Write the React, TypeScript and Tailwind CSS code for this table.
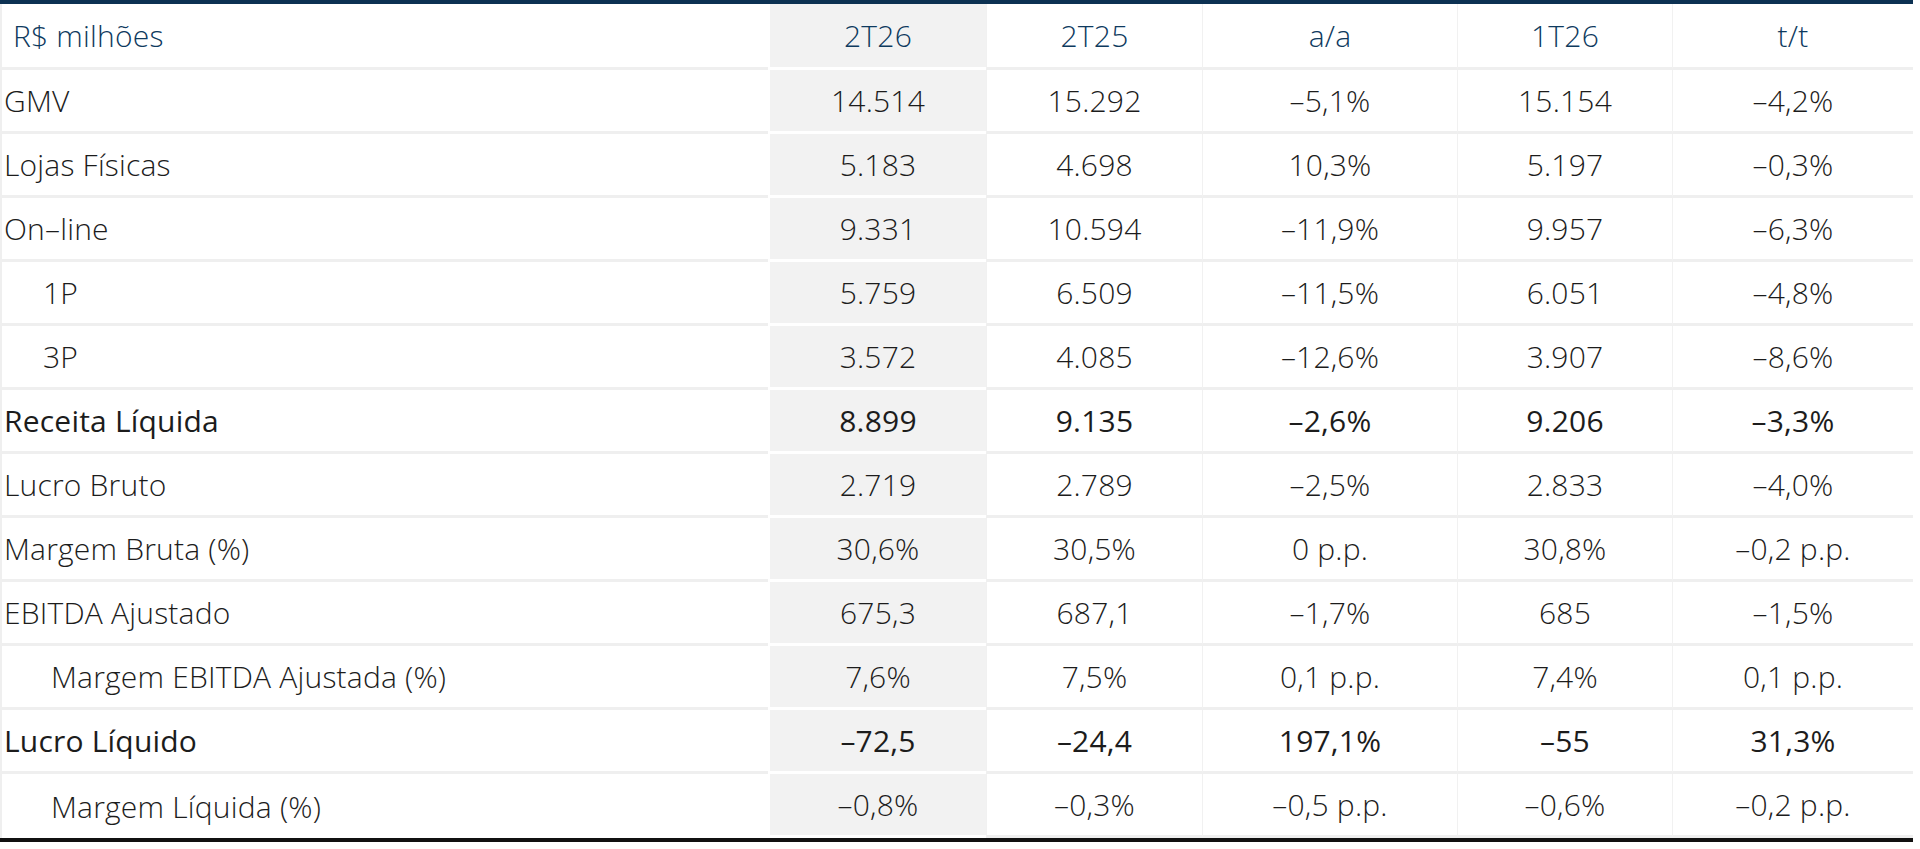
type Row = {
  label: string;
  indent?: 0 | 1 | 2;
  strong?: boolean;
  values: string[];
};

const rows: Row[] = [
  { label: 'GMV', values: ['14.514', '15.292', '–5,1%', '15.154', '–4,2%'] },
  { label: 'Lojas Físicas', values: ['5.183', '4.698', '10,3%', '5.197', '–0,3%'] },
  { label: 'On–line', values: ['9.331', '10.594', '–11,9%', '9.957', '–6,3%'] },
  { label: '1P', indent: 1, values: ['5.759', '6.509', '–11,5%', '6.051', '–4,8%'] },
  { label: '3P', indent: 1, values: ['3.572', '4.085', '–12,6%', '3.907', '–8,6%'] },
  { label: 'Receita Líquida', strong: true, values: ['8.899', '9.135', '–2,6%', '9.206', '–3,3%'] },
  { label: 'Lucro Bruto', values: ['2.719', '2.789', '–2,5%', '2.833', '–4,0%'] },
  { label: 'Margem Bruta (%)', values: ['30,6%', '30,5%', '0 p.p.', '30,8%', '–0,2 p.p.'] },
  { label: 'EBITDA Ajustado', values: ['675,3', '687,1', '–1,7%', '685', '–1,5%'] },
  { label: 'Margem EBITDA Ajustada (%)', indent: 2, values: ['7,6%', '7,5%', '0,1 p.p.', '7,4%', '0,1 p.p.'] },
  { label: 'Lucro Líquido', strong: true, values: ['–72,5', '–24,4', '197,1%', '–55', '31,3%'] },
  { label: 'Margem Líquida (%)', indent: 2, values: ['–0,8%', '–0,3%', '–0,5 p.p.', '–0,6%', '–0,2 p.p.'] },
];

const headers = ['2T26', '2T25', 'a/a', '1T26', 't/t'];

const grid = 'grid grid-cols-[768px_218px_216px_255px_215px_241px]';

// first value column is the highlighted quarter
const valueCell = (i: number) =>
  i === 0
    ? 'bg-[#f2f2f2] border-l-2 border-l-white border-b-[3px] border-b-white'
    : 'bg-white border-l border-l-[#f1f1f1] border-b-[3px] border-b-[#efefef]';

export default function App() {
  return (
    <div className="min-h-screen bg-white font-['Open_Sans',sans-serif] font-light text-[30px] tracking-[0.2px] text-[#1c1c1c]">
      <div className="w-[1913px] border-t-4 border-t-[#0c3152] border-b-4 border-b-[#111111]">
        <div className={`${grid} h-[66px] text-[#0e3a5e]`}>
          <div className="flex items-center pl-[11px] border-l-2 border-l-[#efefef] border-b-[3px] border-b-[#efefef]">
            R$ milhões
          </div>
          {headers.map((h, i) => (
            <div key={h} className={`flex items-center justify-center ${valueCell(i)}`}>
              {h}
            </div>
          ))}
        </div>

        {rows.map((r, ri) => {
          const last = ri === rows.length - 1;
          const pad = r.indent === 1 ? 'pl-[41px]' : r.indent === 2 ? 'pl-[49px]' : 'pl-[2px]';
          return (
            <div key={r.label} className={`${grid} h-16 ${r.strong ? 'font-normal' : ''}`}>
              <div
                className={`flex items-center ${pad} border-l-2 border-l-[#efefef] ${
                  last ? '' : 'border-b-[3px] border-b-[#efefef]'
                }`}
              >
                {r.label}
              </div>
              {r.values.map((v, i) => (
                <div
                  key={i}
                  className={`flex items-center justify-center ${valueCell(i)} ${last ? 'border-b-0' : ''}`}
                >
                  {v}
                </div>
              ))}
            </div>
          );
        })}
      </div>
    </div>
  );
}
